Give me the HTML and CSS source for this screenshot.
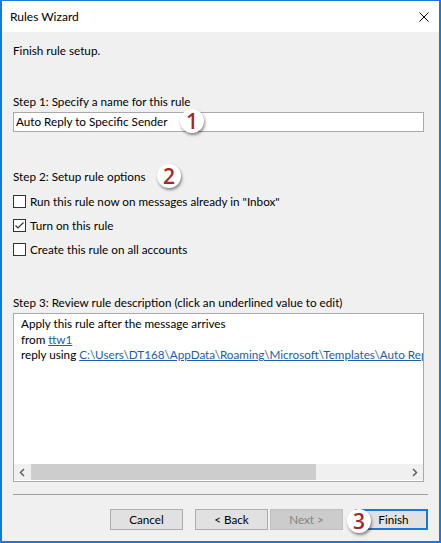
FILE: index.html
```html
<!DOCTYPE html>
<html>
<head>
<meta charset="utf-8">
<link rel="stylesheet" href="styles.css">
</head>
<body>
<div class="window">
  <div class="titlebar">
    <span class="title">Rules Wizard</span>
    <svg class="close" width="10" height="10" viewBox="0 0 10 10"><path d="M0.5 0.5L9.5 9.5M9.5 0.5L0.5 9.5" stroke="#000" stroke-width="1" fill="none"/></svg>
  </div>
  <div class="content">
    <div class="intro">Finish rule setup.</div>
    <div class="label step1">Step 1: Specify a name for this rule</div>
    <div class="field-wrap">
      <div class="input">Auto Reply to Specific Sender</div>
      <span class="badge b1">1</span>
    </div>
    <div class="label step2">Step 2: Setup rule options<span class="badge b2">2</span></div>
    <div class="options">
      <div class="check"><span class="box"></span>Run this rule now on messages already in "Inbox"</div>
      <div class="check"><span class="box"><svg width="11" height="11" viewBox="0 0 11 11"><path d="M1.5 5.5L4 8L9.5 2.5" stroke="#333" stroke-width="1.2" fill="none"/></svg></span>Turn on this rule</div>
      <div class="check"><span class="box"></span>Create this rule on all accounts</div>
    </div>
    <div class="label step3">Step 3: Review rule description (click an underlined value to edit)</div>
    <div class="desc">
      <div class="desc-text">
        <div class="line">Apply this rule after the message arrives</div>
        <div class="line">from <span class="link">ttw1</span></div>
        <div class="line">reply using <span class="link">C:\Users\DT168\AppData\Roaming\Microsoft\Templates\Auto Reply to Specific Sender.oft</span></div>
      </div>
      <div class="hscroll">
        <span class="arrow"><svg width="7" height="9" viewBox="0 0 7 9"><path d="M5 1L1.5 4.5L5 8" stroke="#606060" stroke-width="1.5" fill="none"/></svg></span>
        <div class="track"><div class="thumb"></div></div>
        <span class="arrow"><svg width="7" height="9" viewBox="0 0 7 9"><path d="M2 1L5.5 4.5L2 8" stroke="#606060" stroke-width="1.5" fill="none"/></svg></span>
      </div>
    </div>
    <div class="sep"></div>
    <div class="buttons">
      <div class="btn cancel">Cancel</div>
      <div class="btn back">&lt; Back</div>
      <div class="btn next disabled">Next &gt;</div>
      <div class="btn finish">Finish<span class="badge b3">3</span></div>
    </div>
  </div>
</div>
</body>
</html>
```

FILE: styles.css
```css
* { box-sizing: border-box; }
html, body { margin: 0; padding: 0; background: #fff; }
body {
  font-family: "Segoe UI", Lato, "Noto Sans", sans-serif;
  font-size: 11.7px;
  color: #000;
}
.window {
  width: 441px;
  height: 543px;
  border-style: solid;
  border-color: #1a78dc;
  border-width: 1px 2px 2px 2px;
  display: flex;
  flex-direction: column;
}
.titlebar {
  height: 31px;
  background: #fff;
  display: flex;
  align-items: center;
  justify-content: space-between;
  padding: 0 10px 0 8px;
}
.title { font-size: 12px; line-height: 16px; }
.close { display: block; }
.content {
  flex: 1;
  background: #f0f0f0;
  padding: 0 11px;
  display: flex;
  flex-direction: column;
}
.intro { margin-top: 10px; line-height: 16px; }
.label { line-height: 16px; position: relative; }
.step1 { margin-top: 35px; }
.field-wrap { margin-top: 3px; position: relative; width: 411px; }
.input {
  height: 20px;
  border: 1px solid #a9a9a9;
  background: #fff;
  line-height: 17px;
  padding-left: 2px;
}
.step2 { margin-top: 36px; }
.options { margin-top: 9px; display: flex; flex-direction: column; gap: 8px; }
.check {
  height: 16px;
  line-height: 16px;
  display: flex;
  align-items: center;
}
.box {
  width: 13px;
  height: 13px;
  border: 1px solid #333;
  background: #fff;
  margin-right: 4px;
  display: flex;
  align-items: center;
  justify-content: center;
}
.box svg { display: block; }
.step3 { margin-top: 37px; }
.desc {
  margin-top: 3px;
  width: 411px;
  height: 169px;
  border: 1px solid #a9a9a9;
  background: #fff;
  display: flex;
  flex-direction: column;
}
.desc-text {
  flex: 1;
  padding: 2px 0 0 7px;
  overflow: hidden;
}
.line { line-height: 15.5px; white-space: nowrap; }
.link { color: #1c5ea8; text-decoration: underline; }
.hscroll {
  height: 16px;
  margin-bottom: 1px;
  background: #f0f0f0;
  display: flex;
  align-items: stretch;
}
.arrow {
  width: 17px;
  display: flex;
  align-items: center;
  justify-content: center;
}
.arrow svg { display: block; }
.track { flex: 1; display: flex; }
.thumb { width: 285px; background: #cdcdcd; }
.sep { margin-top: 12px; height: 1px; background: #a0a0a0; }
.buttons {
  margin-top: 14px;
  display: flex;
  justify-content: flex-end;
}
.btn {
  width: 73px;
  height: 21px;
  border: 1px solid #adadad;
  background: #e1e1e1;
  text-align: center;
  line-height: 19px;
  position: relative;
}
.back { margin-left: 12px; }
.next { margin-left: 2px; }
.finish { margin-left: 12px; border: 2px solid #1a78dc; line-height: 17px; padding-left: 4px; }
.disabled { background: #cccccc; border-color: #bfbfbf; color: #838383; }
.badge {
  position: absolute;
  width: 24px;
  height: 24px;
  border-radius: 50%;
  background: #fff;
  box-shadow: 1px 2px 3px rgba(0,0,0,0.45);
  color: #a3282b;
  font-family: "Open Sans", "Noto Sans", sans-serif;
  font-weight: 600;
  font-size: 21px;
  line-height: 24px;
  text-align: center;
}
.b1 { left: 167px; top: -3px; }
.b2 { left: 144px; top: -4px; }
.b3 { left: -10px; top: -2px; }
```
